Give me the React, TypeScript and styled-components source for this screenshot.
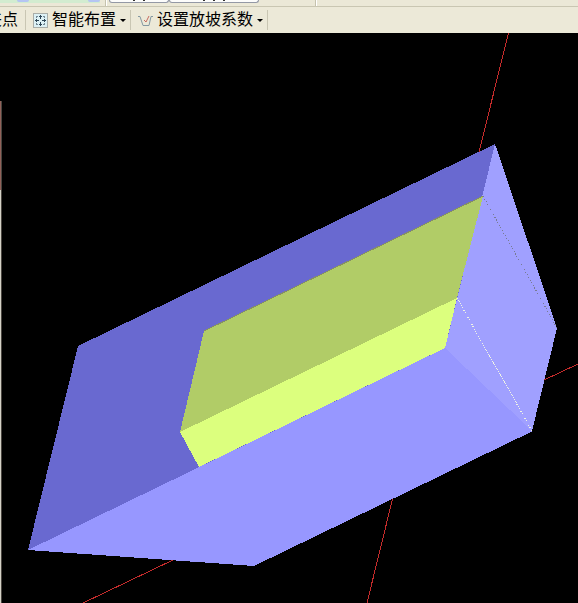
import React from "react";
import styled, { createGlobalStyle } from "styled-components";

const GlobalStyle = createGlobalStyle`
  html, body, #root { height: 100%; }
  body { margin: 0; background: #000; overflow: hidden; }
  * { box-sizing: border-box; }
`;

const Window = styled.div`
  display: flex;
  flex-direction: column;
  height: 100vh;
  overflow: hidden;
  background: #000;
  color: #000;
  font-family: "Liberation Sans", "Noto Sans CJK SC", sans-serif;
`;

const UpperBar = styled.div`
  display: flex;
  flex: none;
  height: 7px;
  background: #ebe8d7;
  border-bottom: 1px solid #c9c6b2;
  overflow: hidden;
`;

const Combo = styled.div<{ $width: number }>`
  display: flex;
  justify-content: flex-end;
  flex: none;
  width: ${(p) => p.$width}px;
  height: 3px;
  background: #d2ecd0;
`;

const ComboArrow = styled.span`
  width: 12px;
  height: 2px;
  background: #b4c5f3;
  border-radius: 0 0 3px 3px;
`;

const UpperDivider = styled.span<{ $before: number; $after: number }>`
  flex: none;
  width: 2px;
  height: 6px;
  margin: 0 ${(p) => p.$after}px 0 ${(p) => p.$before}px;
  background: #c5c2ae;
  border-right: 1px solid #fff;
`;

const UpperTab = styled.span<{ $width: number }>`
  display: flex;
  justify-content: center;
  gap: 8px;
  flex: none;
  width: ${(p) => p.$width}px;
  height: 3px;
  background: #fcfcfb;
  border: 1px solid #9398a5;
  border-top: 0;
  border-radius: 0 0 3px 3px;
`;

const TabMark = styled.span`
  width: 2px;
  height: 1px;
  background: #333;
`;

const Toolbar = styled.div`
  display: flex;
  align-items: center;
  flex: none;
  height: 26px;
  background: #ece9d8;
  overflow: hidden;
`;

const ToolButton = styled.button<{ $clipped?: boolean }>`
  display: flex;
  align-items: center;
  flex: none;
  gap: 4px;
  height: 26px;
  padding: 0 ${(p) => (p.$clipped ? 7 : 4)}px 0 7px;
  margin-left: ${(p) => (p.$clipped ? "-21px" : "0")};
  border: 0;
  background: transparent;
  color: #000;
  font: inherit;
  font-size: 16px;
  line-height: 24px;
  white-space: nowrap;
`;

const Separator = styled.span`
  flex: none;
  width: 1px;
  height: 20px;
  background: #c9c6b3;
`;

const Caret = styled.span`
  border: 3px solid transparent;
  border-top-color: #000;
  border-bottom: 0;
`;

const Viewport = styled.main`
  flex: 1;
  min-height: 0;
  background: #000;
`;

const Scene = styled.svg`
  display: block;
  width: 100%;
  height: 100%;
`;

const ArrangeIcon = () => (
  <svg width="15" height="15" viewBox="0 0 15 15" aria-hidden="true">
    <rect x="1" y="1" width="13" height="13" fill="#dcf1f5" />
    <rect x=".5" y=".5" width="14" height="14" fill="none" stroke="#66737b" strokeDasharray="1 1" />
    <g fill="#2d4656" shapeRendering="crispEdges">
      <path d="M7 2h1v1h1v1H8v2H7V4H6V3h1zM7 13h1v-1h1v-1H8V9H7v2H6v1h1z" />
      <path d="M2 7v1h1v1h1V8h2V7H4V6H3v1zM13 7v1h-1v1h-1V8H9V7h2V6h1v1z" />
      <path d="M3 3h2v1H4v1H3zM12 3h-2v1h1v1h1zM3 12h2v-1H4v-1H3zM12 12h-2v-1h1v-1h1z" opacity=".6" />
    </g>
  </svg>
);

const SlopeIcon = () => (
  <svg width="15" height="15" viewBox="0 0 15 15" aria-hidden="true">
    <path d="M0 3.5h2L5 12.500h6L13 3.500h2" fill="none" stroke="#8599a2" />
    <path d="M6 7l2 2 3-6" fill="none" stroke="#c66a5f" />
  </svg>
);

export default function App() {
  return (
    <Window>
      <GlobalStyle />
      <UpperBar>
        <Combo $width={29}><ComboArrow /></Combo>
        <Combo $width={71}><ComboArrow /></Combo>
        <UpperDivider $before={5} $after={2} />
        <UpperTab $width={60}><TabMark /><TabMark /></UpperTab>
        <UpperTab $width={90}><TabMark /><TabMark /><TabMark /></UpperTab>
        <UpperDivider $before={56} $after={0} />
      </UpperBar>
      <Toolbar>
        <ToolButton $clipped>夹点</ToolButton>
        <Separator />
        <ToolButton><ArrangeIcon />智能布置<Caret /></ToolButton>
        <Separator />
        <ToolButton><SlopeIcon />设置放坡系数<Caret /></ToolButton>
        <Separator />
      </Toolbar>
      <Viewport>
        <Scene viewBox="0 33 578 570" preserveAspectRatio="xMidYMid slice" role="img" aria-label="3D">
          <g stroke="#c52b2b" strokeWidth="1" shapeRendering="crispEdges">
            <path d="M508.500 33L479 152M578 364L544 380M393 497L367 603M174 559.500L83 603" />
          </g>
          <g shapeRendering="crispEdges">
            <path d="M78 346L495 144L450 365L199 480L28 550Z" fill="#6969d0" />
            <path d="M28 550L445 348L533 431L254 566Z" fill="#9797ff" />
            <path d="M495 144L557 328L532 431L445 348Z" fill="#a0a0ff" />
            <path d="M204 331L483 196L457 298L180 432Z" fill="#b1cc67" />
            <path d="M180 432L457 298L445 348L199 467Z" fill="#dcff7e" />
            <path d="M204 331L483 196" stroke="#858f66" />
            <path d="M483 196L557 328" stroke="#777b94" strokeDasharray="1 2" />
            <path d="M457 298L532 431" stroke="#f0f4e4" strokeDasharray="1 1" />
          </g>
          <path d="M.5 101V190" stroke="#916159" />
          <path d="M.5 190V603" stroke="#d5d3c7" />
          <path d="M1.500 101V603" stroke="#4a4640" />
        </Scene>
      </Viewport>
    </Window>
  );
}
